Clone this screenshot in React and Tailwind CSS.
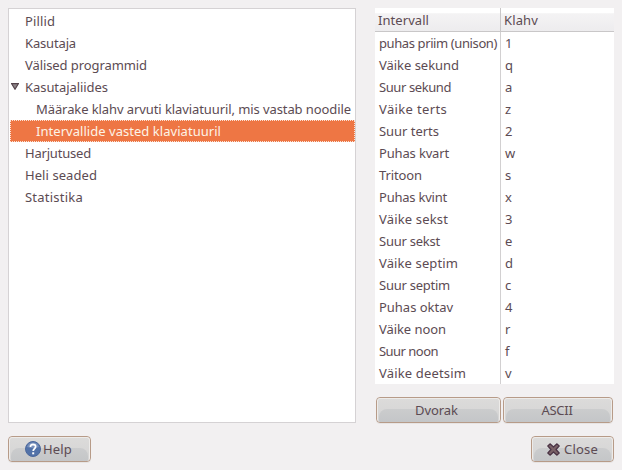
import { useLayoutEffect, useRef } from "react";

const tree = [
  { label: "Pillid", width: 30 },
  { label: "Kasutaja", width: 51 },
  { label: "Välised programmid", width: 122 },
  { label: "Kasutajaliides", width: 83, open: true },
  { label: "Määrake klahv arvuti klaviatuuril, mis vastab noodile", width: 315, child: true },
  { label: "Intervallide vasted klaviatuuril", width: 185, child: true, selected: true },
  { label: "Harjutused", width: 66 },
  { label: "Heli seaded", width: 72 },
  { label: "Statistika", width: 58 },
];

const intervals = [
  ["puhas priim (unison)", 118, "1"],
  ["Väike sekund", 80, "q"],
  ["Suur sekund", 72, "a"],
  ["Väike terts", 68, "z"],
  ["Suur terts", 60, "2"],
  ["Puhas kvart", 70, "w"],
  ["Tritoon", 43, "s"],
  ["Puhas kvint", 68, "x"],
  ["Väike sekst", 69, "3"],
  ["Suur sekst", 61, "e"],
  ["Väike septim", 79, "d"],
  ["Suur septim", 71, "c"],
  ["Puhas oktav", 74, "4"],
  ["Väike noon", 67, "r"],
  ["Suur noon", 59, "f"],
  ["Väike deetsim", 87, "v"],
];

// A label whose tracking is adjusted so that it fills the given width.
function Label({ width, children }) {
  const ref = useRef(null);
  useLayoutEffect(() => {
    const el = ref.current;
    el.style.letterSpacing = "0px";
    const natural = el.getBoundingClientRect().width;
    el.style.letterSpacing = `${(width - natural) / children.length}px`;
  }, [width, children]);
  return <span ref={ref} className="inline-block whitespace-pre">{children}</span>;
}

function TreeRow({ row }) {
  return (
    <div
      className={`flex h-[22px] items-center border border-dotted ${
        row.selected ? "border-[#fbe3d6] bg-[#ee7644] text-[#fdf3e6]" : "border-transparent"
      }`}
    >
      <span className={`flex shrink-0 ${row.child ? "w-[25px]" : "w-[14px]"}`}>
        {row.open && (
          <svg width="8" height="7" viewBox="0 0 8 7" className="-mt-0.5">
            <path d="M.6.7h6.8L4 6.2Z" fill="#8d8488" stroke="#54434b" strokeWidth="1.2" />
          </svg>
        )}
      </span>
      <Label width={row.width}>{row.label}</Label>
    </div>
  );
}

// A beveled button; its lower half is darker, and the dark part curves down at both ends.
function Button({ className, children }) {
  return (
    <button
      className={`relative isolate flex h-[26px] items-center justify-center overflow-hidden rounded-[4px] border border-[#b79b88] bg-linear-to-b from-[#dcdbda] to-[#d4d4d4] shadow-[0_1px_0_#e6e4e4] ${className}`}
    >
      <span className="absolute inset-x-[2px] top-[11px] bottom-0 -z-10 rounded-t-[8px] bg-linear-to-b from-[#cbcccd] to-[#c4c6c8]" />
      <span className="absolute inset-0 -z-10 rounded-[3px] border border-b-0 border-[#edebe9]" />
      {children}
    </button>
  );
}

function HelpIcon() {
  return (
    <svg width="16" height="16" viewBox="0 0 16 16">
      <circle cx="8" cy="8" r="7.5" fill="#5272a8" stroke="#4c689c" />
      <path d="M2 6a6.3 6.3 0 0 1 12 0Q8 8 2 6Z" fill="#7890bb" />
      <path d="M5.5 6Q5.3 3.5 8 3.5t2.6 2.2C10.6 7.6 8.2 7.6 8.2 10" fill="none" stroke="#fff" strokeWidth="1.8" />
      <rect x="7.2" y="11.3" width="2" height="2" fill="#fff" />
    </svg>
  );
}

function CloseIcon() {
  return (
    <svg width="13" height="13" viewBox="0 0 13 13">
      <path
        d="M3 .8 6.5 4 10 .8 12.2 3 9 6.5l3.2 3.5L10 12.2 6.5 9 3 12.2.8 10 4 6.5.8 3Z"
        fill="#796166"
        stroke="#4a3244"
        strokeWidth="1.2"
        strokeLinejoin="round"
      />
    </svg>
  );
}

export default function App() {
  return (
    <div className="flex h-[470px] w-[622px] flex-col bg-[#f2f0f1] px-2 pt-2 font-['Noto_Sans',sans-serif] text-[13px] leading-[20px] text-[#5c4b53]">
      <div className="flex h-[415px] justify-between">
        <div className="w-[348px] border border-[#d5d2d4] bg-white pt-px pl-px">
          {tree.map((row) => (
            <TreeRow key={row.label} row={row} />
          ))}
        </div>
        <div className="flex w-[239px] flex-col">
          <div className="h-[376px] bg-white">
            <div className="flex h-6 border-b border-[#c9c7c8] bg-linear-to-b from-white from-20% via-[#f4f3f4] via-25% to-[#edecee]">
              <div className="flex w-[126px] items-center border-r border-[#c9c7c8] pl-[3px]">
                <Label width={51}>Intervall</Label>
              </div>
              <div className="flex items-center pl-[3px]">
                <Label width={34}>Klahv</Label>
              </div>
            </div>
            {intervals.map(([name, width, key]) => (
              <div key={name} className="flex h-[22px]">
                <div className="flex w-[126px] items-center border-r border-[#d2d0d1] pl-1">
                  <Label width={width}>{name}</Label>
                </div>
                <div className="flex items-center pl-1">{key}</div>
              </div>
            ))}
          </div>
          <div className="mt-[13px] flex gap-0.5 px-px">
            <Button className="w-[125px] pr-1">
              <Label width={43}>Dvorak</Label>
            </Button>
            <Button className="w-[110px] pr-0.5">
              <Label width={31}>ASCII</Label>
            </Button>
          </div>
        </div>
      </div>
      <div className="mt-[13px] flex justify-between">
        <Button className="w-[83px] gap-0.5 pr-0.5">
          <HelpIcon />
          <Label width={29}>Help</Label>
        </Button>
        <Button className="w-[83px] gap-1">
          <CloseIcon />
          <Label width={34}>Close</Label>
        </Button>
      </div>
    </div>
  );
}
